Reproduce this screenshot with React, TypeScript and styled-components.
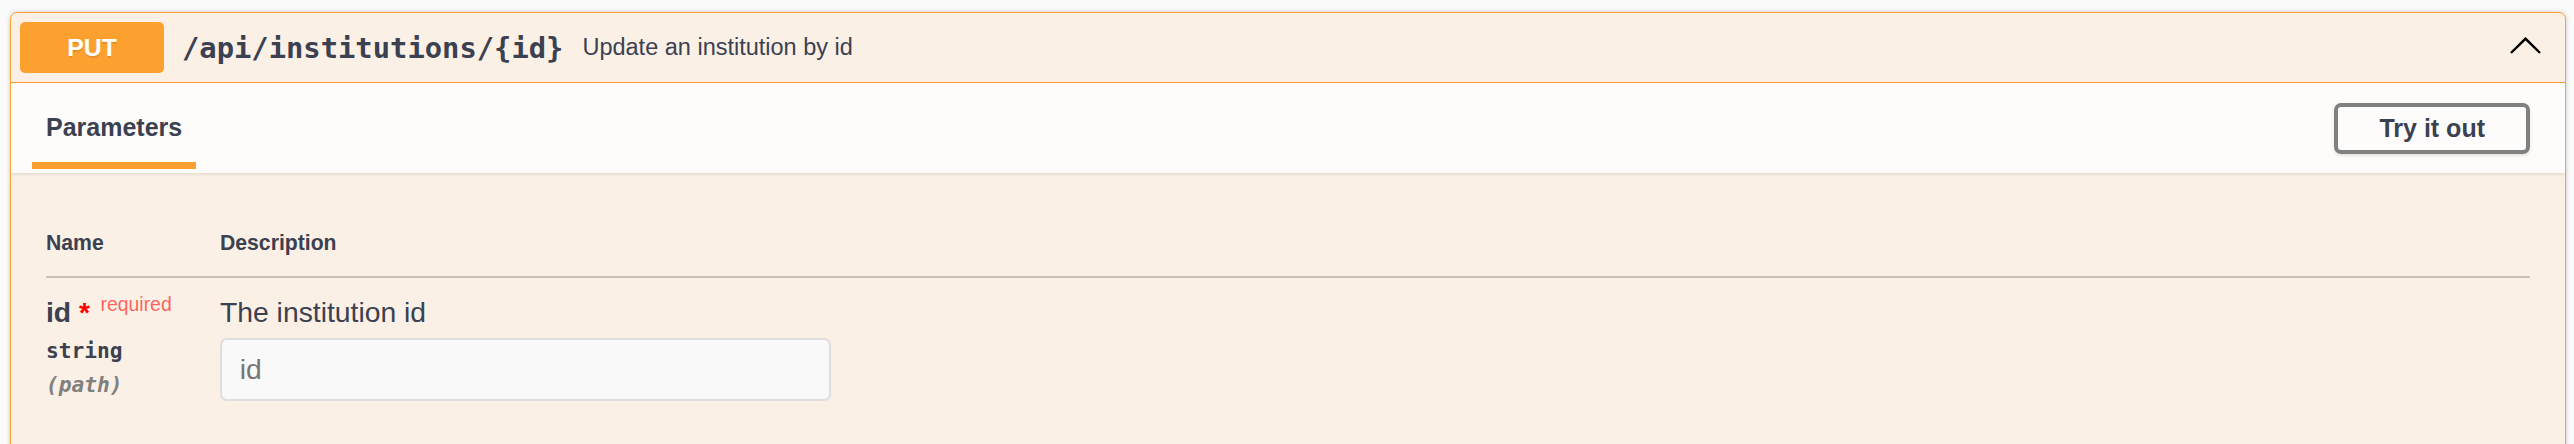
import React from "react";
import styled, { createGlobalStyle } from "styled-components";

const GlobalStyle = createGlobalStyle`
  html, body {
    margin: 0;
    padding: 0;
    background: #fafafa;
    font-family: "Liberation Sans", Arial, sans-serif;
    color: #3b4151;
  }
  * { box-sizing: border-box; }
`;

const Page = styled.div`
  padding: 12px 8px 0 10px;
`;

const Opblock = styled.section`
  border: 1px solid #fca130;
  border-radius: 7px;
  background: rgba(252, 161, 48, 0.1);
  box-shadow: 0 0 5px rgba(0, 0, 0, 0.19);
  overflow: hidden;
`;

const Summary = styled.div`
  display: flex;
  align-items: center;
  padding: 9px;
  border-bottom: 1px solid #fca130;
`;

const MethodBadge = styled.span`
  display: flex;
  align-items: center;
  justify-content: center;
  width: 144px;
  height: 51px;
  border-radius: 5px;
  background: #fca130;
  color: #fff;
  font-size: 24.8px;
  font-weight: 700;
  text-shadow: 0 1.7px 0 rgba(0, 0, 0, 0.1);
`;

const Path = styled.span`
  padding: 0 19px 0 18px;
  font-family: "DejaVu Sans Mono", monospace;
  font-size: 28.8px;
  font-weight: 700;
  color: #3b4151;
`;

const Description = styled.span`
  flex: 1;
  font-size: 23.5px;
  color: #3b4151;
`;

const ArrowButton = styled.button`
  display: flex;
  align-items: center;
  border: none;
  background: none;
  padding: 0 13px 7px 0;
  cursor: pointer;
`;

const SectionHeader = styled.div`
  display: flex;
  justify-content: space-between;
  height: 90px;
  padding: 0 35px;
  background: rgba(255, 255, 255, 0.8);
  box-shadow: 0 1.7px 3.5px rgba(0, 0, 0, 0.1);
`;

const TabItem = styled.div`
  display: flex;
  flex-direction: column;
  align-items: center;
  padding-top: 29.5px;
`;

const TabTitle = styled.h4`
  margin: 0;
  font-size: 25px;
  line-height: 29px;
  font-weight: 700;
  color: #3b4151;
`;

const TabUnderline = styled.span`
  display: block;
  align-self: stretch;
  margin: 20.5px -13.6px 0;
  height: 7px;
  background: #fca130;
`;

const TryButton = styled.button`
  align-self: center;
  height: 51px;
  padding: 0 41px;
  border: 4px solid #808080;
  border-radius: 7px;
  background: transparent;
  box-shadow: 0 1.7px 3.5px rgba(0, 0, 0, 0.1);
  font-family: "Liberation Sans", Arial, sans-serif;
  font-size: 25px;
  font-weight: 700;
  color: #3b4151;
  cursor: pointer;
`;

const TableContainer = styled.div`
  padding: 35px 35px 60px;
`;

const Row = styled.div<{ $head?: boolean }>`
  display: grid;
  grid-template-columns: 174px 1fr;
  align-items: start;
  padding: ${(p) => (p.$head ? "22.5px 0 21.5px" : "18px 0")};
  border-bottom: ${(p) => (p.$head ? "2px solid #c9c0b8" : "none")};
`;

const HeadCell = styled.div`
  font-size: 21.2px;
  line-height: 24px;
  font-weight: 700;
  color: #3b4151;
`;

const NameCell = styled.div`
  display: flex;
  flex-direction: column;
`;

const ParamName = styled.div`
  height: 32px;
  font-size: 28.3px;
  line-height: 32px;
  font-weight: 700;
  color: #3b4151;
  white-space: nowrap;
`;

const Star = styled.span`
  color: #ff0000;
`;

const Required = styled.span`
  padding-left: 10.5px;
  font-size: 19.4px;
  line-height: 0;
  font-weight: 400;
  color: rgba(255, 0, 0, 0.62);
  vertical-align: 10.6px;
`;

const ParamMeta = styled.div<{ $italic?: boolean }>`
  margin-top: ${(p) => (p.$italic ? "10px" : "11px")};
  font-family: "DejaVu Sans Mono", monospace;
  font-size: 21.2px;
  line-height: 24px;
  font-weight: 700;
  font-style: ${(p) => (p.$italic ? "italic" : "normal")};
  color: ${(p) => (p.$italic ? "#808080" : "#3b4151")};
`;

const DescCell = styled.div`
  display: flex;
  flex-direction: column;
  align-items: flex-start;
`;

const DescText = styled.p`
  margin: 0;
  font-size: 28.3px;
  line-height: 32px;
  color: #3b4151;
`;

const Input = styled.input`
  margin-top: 10px;
  width: 611px;
  height: 63px;
  padding: 0 17.7px;
  border: 2px solid #dedede;
  border-radius: 7px;
  background: #f9f9f9;
  font-family: "Liberation Sans", Arial, sans-serif;
  font-size: 28.3px;
  color: #3b4151;
  outline: none;
  &::placeholder {
    color: #777;
  }
`;

const ChevronUp = () => (
  <svg width="35" height="35" viewBox="0 0 20 20" aria-hidden="true">
    <path
      fill="#000"
      d="M 17.418 14.908 C 17.69 15.176 18.127 15.176 18.397 14.908 C 18.667 14.64 18.668 14.207 18.397 13.939 L 10.489 6.109 C 10.219 5.841 9.782 5.841 9.51 6.109 L 1.602 13.939 C 1.332 14.207 1.332 14.64 1.602 14.908 C 1.873 15.176 2.311 15.176 2.581 14.908 L 10 7.767 L 17.418 14.908 Z"
    />
  </svg>
);

export default function App() {
  return (
    <>
      <GlobalStyle />
      <Page>
        <Opblock>
          <Summary>
            <MethodBadge>PUT</MethodBadge>
            <Path>/api/institutions/&#8203;{"{id}"}</Path>
            <Description>Update an institution by id</Description>
            <ArrowButton aria-label="Collapse operation">
              <ChevronUp />
            </ArrowButton>
          </Summary>
          <SectionHeader>
            <TabItem>
              <TabTitle>Parameters</TabTitle>
              <TabUnderline />
            </TabItem>
            <TryButton>Try it out</TryButton>
          </SectionHeader>
          <TableContainer>
            <Row $head>
              <HeadCell>Name</HeadCell>
              <HeadCell>Description</HeadCell>
            </Row>
            <Row>
              <NameCell>
                <ParamName>
                  id<Star>&nbsp;*</Star>
                  <Required>required</Required>
                </ParamName>
                <ParamMeta>string</ParamMeta>
                <ParamMeta $italic>(path)</ParamMeta>
              </NameCell>
              <DescCell>
                <DescText>The institution id</DescText>
                <Input placeholder="id" disabled />
              </DescCell>
            </Row>
          </TableContainer>
        </Opblock>
      </Page>
    </>
  );
}
